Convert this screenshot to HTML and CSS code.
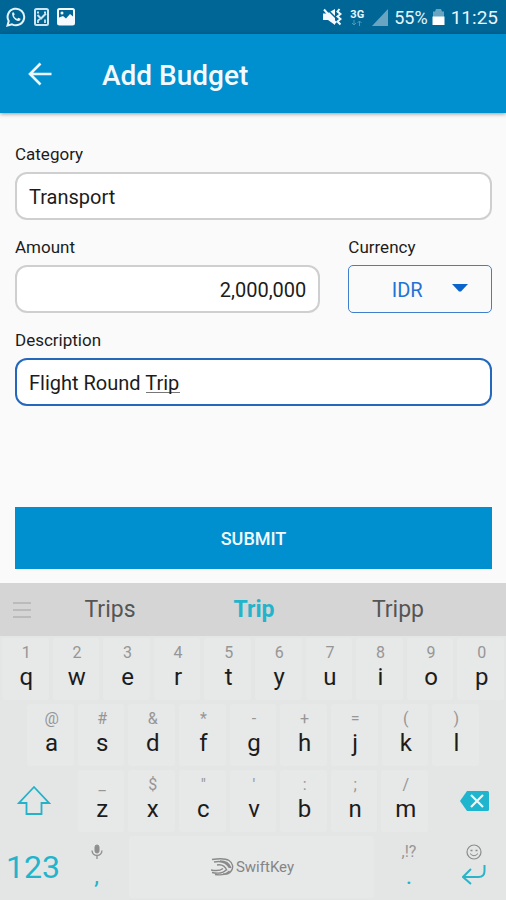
FILE: index.html
```html
<!DOCTYPE html>
<html lang="en">
<head>
<meta charset="utf-8">
<meta name="viewport" content="width=device-width, initial-scale=1">
<title>Add Budget</title>
<link rel="stylesheet" href="styles.css">
</head>
<body>
<div class="status">
  <div class="status-left">
    <svg width="20" height="20" viewBox="0 0 20 20" fill="none" stroke="#e6f3fa"><path d="M1.500 18.500l1.200-4.400A8.300 8.300 0 1 1 6 17.300z" stroke-width="2"/><path d="M6.200 5.800c.8-1 1.600-.6 1.900.2l.6 1.500-.9 1.200c.7 1.500 1.900 2.500 3.300 3.200l1.200-1.200 2.200 1.100c.2 1.600-1.300 2.500-2.700 2.200C8.800 13.300 5.600 9.800 6.200 5.800z" fill="#e6f3fa" stroke="none"/></svg>
    <svg width="15" height="18" viewBox="0 0 15 18" fill="none" stroke="#cfe6f2"><rect x="1" y="1" width="13" height="16" rx="1.500" stroke-width="2"/><path d="M3 4.500h2M10 4.500h2M4 15v-2.500l2-1.500M11 15v-3.500" stroke-width="1.800"/><path d="M3.500 7l3.500 3.500 5-5" stroke-width="2"/></svg>
    <svg width="18" height="18" viewBox="0 0 18 18"><rect x="1" y="1" width="16" height="15.500" rx="1.500" fill="none" stroke="#f4faff" stroke-width="2"/><path d="M2 16V9.500L6 8l3 2.500L13 6l3 2.500V16z" fill="#f4faff"/><circle cx="5" cy="5" r="1.500" fill="#f4faff"/></svg>
  </div>
  <div class="status-right">
    <svg width="20" height="18" viewBox="0 0 20 18"><path d="M1 5.500h4l8-4.500v16L6 12H1z" fill="#f4faff"/><path d="M5 1l9.500 9.500" stroke="#006696" stroke-width="1.500"/><path d="M2 1.500l12 13.500" stroke="#f4faff" stroke-width="2"/><path d="M17.500 1l-2 2.500 3 2.500-3 2.500 3 2.500-3 2.500 3 3" fill="none" stroke="#f4faff" stroke-width="2"/></svg>
    <div class="network"><b>3G</b><svg width="12" height="6" viewBox="0 0 12 6" fill="none" stroke="#4f98ba"><path d="M3 0v5M1 3l2 2 2-2M8.500 6V1M6.500 3l2-2 2 2"/></svg></div>
    <svg width="16" height="17" viewBox="0 0 16 17"><path d="M16 0v17H0z" fill="#69a5c1"/></svg>
    <span class="percent">55%</span>
    <svg class="battery" width="13" height="18" viewBox="0 0 13 18"><path d="M1 3.500h2L4 1h5l1 2.500h2V9H1z" fill="#69a5c1"/><path d="M.5 8.500h12V17H.5z" fill="#fff"/></svg>
    <span class="clock">11:25</span>
  </div>
</div>

<header class="appbar">
  <button class="back" type="button" aria-label="Back"><svg width="24" height="24" viewBox="0 0 24 24" fill="none" stroke="#eaf7ff" stroke-width="2.600"><path d="M23.500 12H3M12.500 1.500L2 12l10.500 10.500"/></svg></button>
  <h1>Add Budget</h1>
</header>

<form class="form">
  <div class="field">
    <label for="category">Category</label>
    <input id="category" type="text" value="Transport">
  </div>
  <div class="pair">
    <div class="field">
      <label for="amount">Amount</label>
      <input id="amount" class="amount" type="text" inputmode="numeric" value="2,000,000">
    </div>
    <div class="field">
      <label for="currency">Currency</label>
      <div class="picker">
        <select id="currency"><option>IDR</option></select>
        <svg class="caret" width="16" height="8" viewBox="0 0 16 8"><path d="M0 0h16L9 7.500H7z" fill="#0b63cc"/></svg>
      </div>
    </div>
  </div>
  <div class="field">
    <label for="description">Description</label>
    <input id="description" class="active" type="text" value="Flight Round Trip">
  </div>
  <button class="submit" type="button">SUBMIT</button>
</form>

<section class="keyboard" aria-label="Keyboard">
  <div class="suggestions">
    <button class="menu" type="button" aria-label="Menu"><svg width="18" height="16" viewBox="0 0 18 16" stroke="#b2b2b2" stroke-width="1.500"><path d="M0 1h18M0 8h18M0 15h18"/></svg></button>
    <button type="button">Trips</button>
    <button class="best" type="button">Trip</button>
    <button type="button">Tripp</button>
  </div>
  <div class="row">
    <button class="key" type="button"><small>1</small>q</button>
    <button class="key" type="button"><small>2</small>w</button>
    <button class="key" type="button"><small>3</small>e</button>
    <button class="key" type="button"><small>4</small>r</button>
    <button class="key" type="button"><small>5</small>t</button>
    <button class="key" type="button"><small>6</small>y</button>
    <button class="key" type="button"><small>7</small>u</button>
    <button class="key" type="button"><small>8</small>i</button>
    <button class="key" type="button"><small>9</small>o</button>
    <button class="key" type="button"><small>0</small>p</button>
  </div>
  <div class="row row-home">
    <button class="key" type="button"><small>@</small>a</button>
    <button class="key" type="button"><small>#</small>s</button>
    <button class="key" type="button"><small>&amp;</small>d</button>
    <button class="key" type="button"><small>*</small>f</button>
    <button class="key" type="button"><small>-</small>g</button>
    <button class="key" type="button"><small>+</small>h</button>
    <button class="key" type="button"><small>=</small>j</button>
    <button class="key" type="button"><small>(</small>k</button>
    <button class="key" type="button"><small>)</small>l</button>
  </div>
  <div class="row">
    <button class="key wide shift" type="button" aria-label="Shift"><svg width="34" height="32" viewBox="0 0 34 32" fill="none" stroke="#25b2c8" stroke-width="1.800"><path d="M17 2L2 18h7.500v11h15V18H32z"/></svg></button>
    <button class="key" type="button"><small>_</small>z</button>
    <button class="key" type="button"><small>$</small>x</button>
    <button class="key" type="button"><small>"</small>c</button>
    <button class="key" type="button"><small>'</small>v</button>
    <button class="key" type="button"><small>:</small>b</button>
    <button class="key" type="button"><small>;</small>n</button>
    <button class="key" type="button"><small>/</small>m</button>
    <button class="key wide erase" type="button" aria-label="Backspace"><svg width="29" height="20" viewBox="0 0 29 20"><path d="M7 0h20.500Q29 0 29 1.500v17Q29 20 27.500 20H7L0 10z" fill="#20b5cf"/><path d="M11 4l12 12M23 4L11 16" stroke="#edf6f7" stroke-width="2.200"/></svg></button>
  </div>
  <div class="row row-space">
    <button class="key numbers" type="button">123</button>
    <button class="key punct" type="button"><svg width="12" height="16" viewBox="0 0 12 16" fill="none" stroke="#8e8e8e"><rect x="4" y="1" width="4" height="8" rx="2" fill="#8e8e8e"/><path d="M1 6.500C1.500 13 10.500 13 11 6.500M6 11.500V15" stroke-width="1.300"/></svg><span>,</span></button>
    <button class="key space" type="button"><svg width="23" height="18" viewBox="0 0 23 18" fill="none" stroke="#8a8a8a" stroke-width="1.400"><path d="M1 1.500C8 .5 14 0 18 2.500s4.500 7 2.500 10-5 4-8.500 3.500"/><path d="M3 4c7-1.500 12-.5 15.500 6M6 7c5-1 8 1 10 5.500M9 3c6 0 9.500 3 11 7"/><path d="M0 12c5 1 9 1 12-1.500M1 14.500c6 1.200 11 .8 14-2.500M4 16.500c5 .8 11 .5 14.500-3.500"/></svg>SwiftKey</button>
    <button class="key punct" type="button"><small>,!?</small><span>.</span></button>
    <button class="key enter" type="button" aria-label="Enter"><svg width="16" height="16" viewBox="0 0 16 16" fill="none" stroke="#8b8b8b"><circle cx="8" cy="8" r="7" stroke-width="1.200"/><path d="M4 9.500q4 4.500 8 0"/><path d="M4.500 6.500h2M9.500 6.500h2" stroke-width="1.500"/></svg><svg width="24" height="20" viewBox="0 0 24 20" fill="none" stroke="#2bb3c8" stroke-width="2"><path d="M22.500 0v6q0 6-6 6H2M9 4l-8 8 8 7"/></svg></button>
  </div>
</section>
</body>
</html>
```

FILE: styles.css
```css
* {
  box-sizing: border-box;
}

body {
  margin: 0;
  min-height: 100vh;
  display: flex;
  flex-direction: column;
  background: #fafafa;
  color: #1c1c1c;
  font-family: Roboto, "Liberation Sans", sans-serif;
}

button,
input,
select {
  font: inherit;
  color: inherit;
  margin: 0;
}

button {
  padding: 0;
  border: 0;
  background: none;
}

svg {
  display: block;
  flex: none;
}

.status {
  display: flex;
  justify-content: space-between;
  align-items: center;
  height: 34px;
  padding: 0 8px 0 6px;
  background: #006696;
  color: #e9f5fb;
}

.status-left,
.status-right {
  display: flex;
  align-items: center;
}

.status-left {
  gap: 8px;
}

.status-right {
  gap: 6px;
}

.network {
  display: flex;
  flex-direction: column;
  align-items: center;
  width: 18px;
  font-size: 11px;
  line-height: 11px;
}

.percent {
  font-size: 18px;
}

.battery {
  margin-left: -2px;
}

.clock {
  font-size: 19px;
}

.appbar {
  display: flex;
  align-items: center;
  height: 79px;
  padding-left: 28px;
  gap: 50px;
  background: #008fcf;
  color: #f2faff;
  box-shadow: 0 1px 4px rgba(0, 0, 0, 0.4);
}

.appbar h1 {
  margin: 0;
  padding-top: 3px;
  font-size: 28px;
  font-weight: 500;
}

.form {
  flex: 1;
  display: flex;
  flex-direction: column;
  gap: 17px;
  padding: 31px 14px 14px 15px;
}

.field {
  display: flex;
  flex-direction: column;
  gap: 8px;
}

.field label {
  font-size: 17px;
  line-height: 20px;
}

.pair {
  display: grid;
  grid-template-columns: 306fr 144fr;
  gap: 28px;
}

.field input,
.field select {
  width: 100%;
  min-width: 0;
  height: 48px;
  font-size: 20px;
  outline: 0;
}

.field input {
  padding: 2px 12px 0;
  border: 2px solid #cfcfcf;
  border-radius: 12px;
  background: #fff;
}

.field .amount {
  text-align: right;
}

.field .active {
  border-color: #2468bd;
  background: linear-gradient(#777, #777) 129px 32px / 34px 1px no-repeat #fff;
}

.picker {
  position: relative;
}

.field select {
  display: block;
  appearance: none;
  padding: 2px 26px 0 0;
  border: 1px solid #3f7fce;
  border-radius: 5px;
  background: #fafafa;
  color: #2274d4;
  text-align: center;
  text-align-last: center;
}

.caret {
  position: absolute;
  top: 19px;
  right: 24px;
  pointer-events: none;
}

.submit {
  height: 62px;
  margin-top: auto;
  background: #008fcf;
  color: #f2faff;
  font-size: 18px;
  font-weight: 500;
}

.keyboard {
  background: #e4e5e5;
}

.suggestions {
  display: grid;
  grid-template-columns: 38px 144fr 144fr 144fr 36px;
  height: 53px;
  background: #d5d5d5;
  color: #555;
  font-size: 23px;
}

.menu {
  display: grid;
  place-items: center;
  padding-left: 6px;
}

.suggestions .best {
  color: #22b4cb;
  font-weight: 700;
}

.row {
  display: grid;
  grid-template-columns: repeat(20, 1fr);
  height: 66px;
}

.row-home {
  padding: 0 5%;
  grid-template-columns: repeat(18, 1fr);
}

.key {
  grid-column: span 2;
  display: flex;
  flex-direction: column;
  align-items: center;
  min-width: 0;
  margin: 2px;
  padding: 5px 0 0 2px;
  border-radius: 3px;
  background: #e7e8e8;
  font-size: 24px;
  line-height: 28px;
}

.key small {
  color: #969696;
  font-size: 16px;
  line-height: 20px;
}

.wide {
  grid-column: span 3;
  justify-content: center;
  padding-top: 0;
  background: none;
}

.shift {
  padding-right: 9px;
}

.erase {
  padding-left: 12px;
}

.row-space {
  grid-template-columns: 66fr 61fr 249fr 66fr 64fr;
}

.row-space .key {
  grid-column: auto;
}

.row-space .numbers,
.row-space .punct,
.row-space .enter {
  background: none;
  color: #22b4cb;
}

.row-space .numbers {
  justify-content: center;
  padding: 0;
  font-size: 32px;
}

.row-space .punct {
  padding: 6px 0 0;
}

.row-space .punct svg {
  margin: 2px 0;
}

.row-space .space {
  flex-direction: row;
  justify-content: center;
  gap: 2px;
  padding-top: 0;
  color: #858585;
  font-size: 15px;
}

.row-space .enter {
  padding: 8px 0 0;
  gap: 5px;
}
```
